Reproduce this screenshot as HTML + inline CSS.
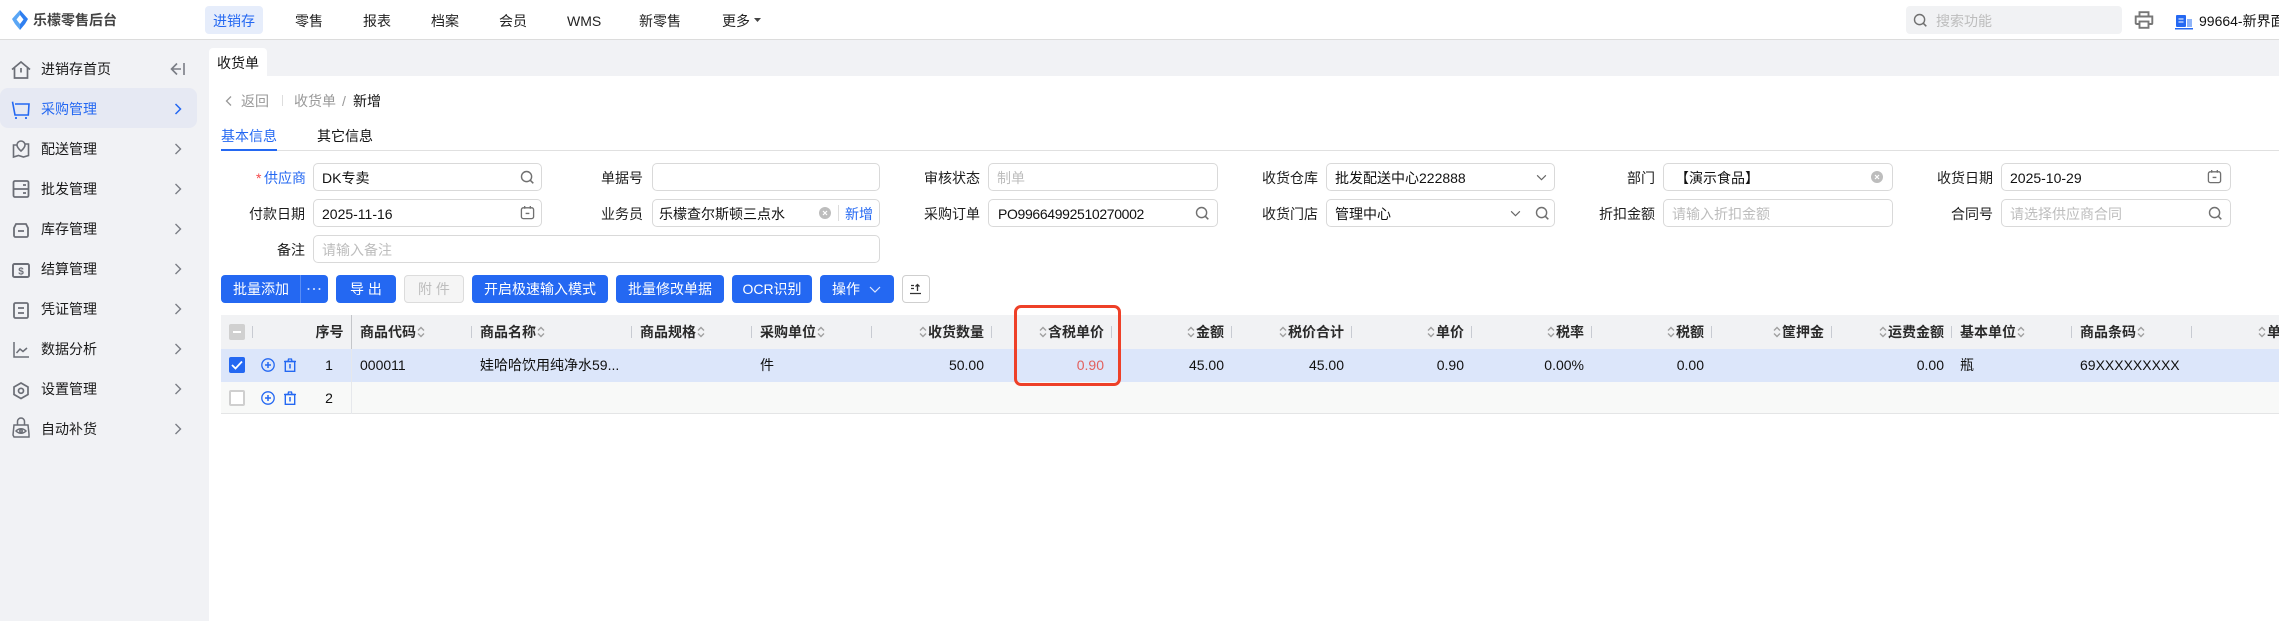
<!DOCTYPE html>
<html lang="zh-CN"><head><meta charset="utf-8"><title>收货单</title>
<style>
*{box-sizing:border-box;margin:0;padding:0}
html,body{width:2279px;height:621px;overflow:hidden;background:#fff}
body{position:relative;font-family:"Liberation Sans","Noto Sans CJK SC",sans-serif;font-size:14px;color:#1c1c1c}
.a{position:absolute}
.t{position:absolute;white-space:nowrap;line-height:20px;height:20px}
.r{text-align:right}
.c{text-align:center}
.i{position:absolute;height:28px;border:1px solid #d9d9d9;border-radius:5px;background:#fff}
.v{color:#111}.p{color:#bdbdbd}
.b{position:absolute;top:275px;height:28px;border-radius:4px;background:#2468f2;color:#fff;line-height:28px;text-align:center;white-space:nowrap}
.h{position:absolute;top:315px;height:34px;line-height:34px;font-weight:700;color:#2a2a2a;white-space:nowrap}
.d{position:absolute;top:326px;height:12px;width:1px;background:#c8cbd2}
.n{position:absolute;top:11px;line-height:20px;height:20px;white-space:nowrap;color:#222}
.m{position:absolute;left:41px;line-height:20px;height:20px;white-space:nowrap;color:#1a1a1a}
svg{position:absolute;overflow:visible}
</style></head><body>
<svg width="0" height="0" style="position:absolute">
<symbol id="s" viewBox="0 0 8 14"><path d="M1 5.500 4 2.500l3 3M1 8.500l3 3 3-3" fill="none" stroke="#a0a0a0" stroke-width="1.400"/></symbol>
<symbol id="q" viewBox="0 0 16 16"><circle cx="7" cy="7" r="5.400" fill="none" stroke="#707070" stroke-width="1.500"/><path d="M11 11l3.200 3.200" stroke="#707070" stroke-width="1.600"/></symbol>
<symbol id="cal" viewBox="0 0 16 16"><rect x="1.500" y="3" width="13" height="11.500" rx="2" fill="none" stroke="#707070" stroke-width="1.400"/><path d="M5 1v3M11 1v3M6 9h4" stroke="#707070" stroke-width="1.400" fill="none"/></symbol>
<symbol id="x" viewBox="0 0 12 12"><circle cx="6" cy="6" r="6" fill="#bdbdbd"/><path d="M4 4l4 4M8 4l-4 4" stroke="#fff" stroke-width="1.200"/></symbol>
<symbol id="dn" viewBox="0 0 12 8"><path d="M1 1.500 6 6.500l5-5" fill="none" stroke="#666" stroke-width="1.300"/></symbol>
<symbol id="ch" viewBox="0 0 8 12"><path d="M1.500 1 6.500 6l-5 5" fill="none" stroke="#7a7d85" stroke-width="1.400"/></symbol>
<symbol id="pl" viewBox="0 0 14 14"><circle cx="7" cy="7" r="6.200" fill="none" stroke="#2468f2" stroke-width="1.300"/><path d="M4 7h6M7 4v6" stroke="#2468f2" stroke-width="1.500"/></symbol>
<symbol id="tr" viewBox="0 0 14 14"><path d="M1 3.500h12M5 3.300 5.500 1h3l.5 2.300" fill="none" stroke="#2468f2" stroke-width="1.300"/><path d="M2.300 3.500h9.400v9.800H2.300z" fill="none" stroke="#2468f2" stroke-width="1.400"/><path d="M7 6v4.500" stroke="#2468f2" stroke-width="1.500"/></symbol>
</svg>

<!-- top bar -->
<div class="a" style="left:0;top:0;width:2279px;height:40px;background:#fff;border-bottom:1px solid #dcdcdc"></div>
<svg style="left:12px;top:10px" width="16" height="20" viewBox="0 0 16 20"><path d="M8 0 3.500 5 0 9l3 5 5 6V14L4.500 9.500 8 5z" fill="#5aa6f5"/><path d="M8 0l4.500 5L16 9l-3 5-5 6V14l3.500-4.500L8 5z" fill="#2f7ff0"/></svg>
<div class="t" style="left:33px;top:10px;font-weight:700;color:#444">乐檬零售后台</div>
<div class="a" style="left:205px;top:6px;width:58px;height:28px;background:#e6edfb;border-radius:4px"></div>
<div class="n" style="left:213px;color:#2468f2">进销存</div>
<div class="n" style="left:295px">零售</div><div class="n" style="left:363px">报表</div><div class="n" style="left:431px">档案</div><div class="n" style="left:499px">会员</div><div class="n" style="left:567px">WMS</div><div class="n" style="left:639px">新零售</div><div class="n" style="left:722px">更多</div>
<svg style="left:754px;top:18px" width="7" height="4"><path d="M0 0h7L3.500 4z" fill="#444"/></svg>
<div class="a" style="left:1906px;top:6px;width:216px;height:28px;background:#f1f2f4;border-radius:4px"></div>
<svg style="left:1913px;top:13px" width="15" height="15"><use href="#q" width="15" height="15"/></svg>
<div class="t p" style="left:1936px;top:11px">搜索功能</div>
<svg style="left:2135px;top:11px" width="18" height="18" viewBox="0 0 18 18"><path d="M4.500 5V1.200h9V5M4.500 13H1.500a.8.8 0 0 1-.8-.8V5.500h16.600v6.700a.8.8 0 0 1-.8.8h-3" fill="none" stroke="#777" stroke-width="1.900"/><rect x="4.500" y="10.500" width="9" height="6.300" fill="none" stroke="#777" stroke-width="1.900"/></svg>
<svg style="left:2175px;top:15px" width="18" height="15" viewBox="0 0 18 15"><rect x="1" y="0" width="10" height="12" rx="1" fill="#2468f2"/><rect x="12" y="4" width="5" height="8" fill="#8fb4f8"/><rect y="13" width="18" height="1.500" fill="#2468f2"/><path d="M3.500 4h5M3.500 7h5" stroke="#fff"/></svg>
<div class="t v" style="left:2199px;top:11px">99664-新界面演示</div>

<!-- sidebar -->
<div class="a" style="left:0;top:40px;width:209px;height:581px;background:#f1f2f5"></div>
<div class="a" style="left:209px;top:40px;width:2070px;height:36px;background:#f1f2f5"></div>
<div class="a" style="left:0;top:88px;width:197px;height:40px;background:#e6e9f3;border-radius:8px"></div>
<div class="m" style="top:59px">进销存首页</div>
<svg style="left:170px;top:62px" width="16" height="14" viewBox="0 0 16 14"><path d="M7 1.500 1.500 7 7 12.500M1.500 7H11M14 1v12" fill="none" stroke="#7a7d85" stroke-width="1.600"/></svg>
<div class="m" style="top:99px;color:#2468f2">采购管理</div>
<div class="m" style="top:139px">配送管理</div><div class="m" style="top:179px">批发管理</div><div class="m" style="top:219px">库存管理</div><div class="m" style="top:259px">结算管理</div><div class="m" style="top:299px">凭证管理</div><div class="m" style="top:339px">数据分析</div><div class="m" style="top:379px">设置管理</div><div class="m" style="top:419px">自动补货</div>
<svg style="left:174px;top:143px" width="8" height="12"><use href="#ch" width="8" height="12"/></svg>
<svg style="left:174px;top:183px" width="8" height="12"><use href="#ch" width="8" height="12"/></svg>
<svg style="left:174px;top:223px" width="8" height="12"><use href="#ch" width="8" height="12"/></svg>
<svg style="left:174px;top:263px" width="8" height="12"><use href="#ch" width="8" height="12"/></svg>
<svg style="left:174px;top:303px" width="8" height="12"><use href="#ch" width="8" height="12"/></svg>
<svg style="left:174px;top:343px" width="8" height="12"><use href="#ch" width="8" height="12"/></svg>
<svg style="left:174px;top:383px" width="8" height="12"><use href="#ch" width="8" height="12"/></svg>
<svg style="left:174px;top:423px" width="8" height="12"><use href="#ch" width="8" height="12"/></svg>
<svg style="left:174px;top:103px" width="8" height="12" viewBox="0 0 8 12"><path d="M1.500 1 6.500 6l-5 5" fill="none" stroke="#2468f2" stroke-width="1.500"/></svg>
<!-- sidebar icons -->
<svg style="left:11px;top:61px" width="20" height="18" viewBox="0 0 20 18" fill="none" stroke="#6b6e76" stroke-width="1.700"><path d="M1 8.500 10 1l9 7.500M3.500 7v10h13V7M10 7v4.500"/></svg>
<svg style="left:12px;top:100px" width="18" height="19" viewBox="0 0 18 19" fill="none" stroke="#2468f2" stroke-width="1.600"><path d="M.5 1.700 3 15h13.300L17 4H3"/><path d="M3 18h2M13 18h2" stroke-width="1.800"/></svg>
<svg style="left:12px;top:140px" width="18" height="18" viewBox="0 0 18 18" fill="none" stroke="#6b6e76" stroke-width="1.600"><path d="M5 5H1.500v12l5-1.500 5 1.500 5-1.500V4H13"/><path d="M9 1a4 4 0 0 1 4 4c0 2.500-4 6-4 6S5 7.500 5 5a4 4 0 0 1 4-4z"/></svg>
<svg style="left:12px;top:180px" width="18" height="18" viewBox="0 0 18 18" fill="none" stroke="#6b6e76" stroke-width="1.800"><rect x="1.500" y="1" width="15" height="16" rx="1.500"/><path d="M1.500 9h15M11 5h3M11 13h3"/></svg>
<svg style="left:13px;top:223px" width="16" height="15" viewBox="0 0 16 15" fill="none" stroke="#6b6e76" stroke-width="1.800"><path d="M3 1h10l2 4v7.500a1.500 1.500 0 0 1-1.500 1.500h-11A1.500 1.500 0 0 1 1 12.500V5zM5 8h6"/></svg>
<svg style="left:12px;top:263px" width="18" height="15" viewBox="0 0 18 15"><rect x="1" y="1" width="16" height="13" rx="1.500" fill="none" stroke="#6b6e76" stroke-width="1.900"/><text x="9" y="11.500" font-size="10" font-weight="700" fill="#6b6e76" text-anchor="middle" font-family="Liberation Sans">$</text></svg>
<svg style="left:13px;top:302px" width="16" height="17" viewBox="0 0 16 17" fill="none" stroke="#6b6e76" stroke-width="1.800"><rect x="1" y="1" width="14" height="15" rx="1.500"/><path d="M5 6h6M5 11h6"/></svg>
<svg style="left:13px;top:342px" width="16" height="16" viewBox="0 0 16 16" fill="none" stroke="#6b6e76" stroke-width="1.500"><path d="M1 0v15h15M3.500 11l3.500-4 3 2.500L14 6"/></svg>
<svg style="left:13px;top:382px" width="16" height="17" viewBox="0 0 16 17" fill="none" stroke="#6b6e76" stroke-width="1.700"><path d="M8 1l7 4v7.500l-7 4-7-4V5z"/><circle cx="8" cy="8.800" r="2.500"/></svg>
<svg style="left:12px;top:417px" width="18" height="21" viewBox="0 0 18 21" fill="none" stroke="#6b6e76" stroke-width="1.500"><path d="M2 8h14l1 9v3H2l-1-2zM5.500 8V4.500a3.500 3.500 0 0 1 7 0V8M4 14c3-3 7-3 10 0-3 3-7 3-10 0z"/><circle cx="9" cy="14" r="1.200"/></svg>

<!-- tab -->
<div class="a" style="left:209px;top:48px;width:58px;height:28px;background:#fff;border-radius:4px 4px 0 0"></div>
<div class="t v" style="left:217px;top:53px">收货单</div>
<!-- breadcrumb -->
<svg style="left:225px;top:96px" width="7" height="10" viewBox="0 0 7 10"><path d="M6 .5 1.500 5 6 9.500" fill="none" stroke="#999" stroke-width="1.300"/></svg>
<div class="t" style="left:241px;top:91px;color:#999">返回</div>
<div class="a" style="left:282px;top:95px;width:1px;height:11px;background:#ddd"></div>
<div class="t" style="left:294px;top:91px;color:#999">收货单</div>
<div class="t" style="left:342px;top:91px;color:#999">/</div>
<div class="t v" style="left:353px;top:91px">新增</div>
<!-- sub tabs -->
<div class="a" style="left:221px;top:150px;width:2058px;height:1px;background:#e0e0e0"></div>
<div class="t" style="left:221px;top:126px;color:#2468f2">基本信息</div>
<div class="a" style="left:221px;top:149px;width:56px;height:2px;background:#2468f2"></div>
<div class="t v" style="left:317px;top:126px">其它信息</div>

<!-- form labels -->
<div class="t" style="left:256px;top:168px;color:#f5484a">*</div>
<div class="t" style="left:264px;top:168px;color:#2468f2">供应商</div>
<div class="t r" style="left:205px;width:100px;top:204px">付款日期</div>
<div class="t r" style="left:205px;width:100px;top:240px">备注</div>
<div class="t r" style="left:543px;width:100px;top:168px">单据号</div>
<div class="t r" style="left:543px;width:100px;top:204px">业务员</div>
<div class="t r" style="left:880px;width:100px;top:168px">审核状态</div>
<div class="t r" style="left:880px;width:100px;top:204px">采购订单</div>
<div class="t r" style="left:1218px;width:100px;top:168px">收货仓库</div>
<div class="t r" style="left:1218px;width:100px;top:204px">收货门店</div>
<div class="t r" style="left:1555px;width:100px;top:168px">部门</div>
<div class="t r" style="left:1555px;width:100px;top:204px">折扣金额</div>
<div class="t r" style="left:1893px;width:100px;top:168px">收货日期</div>
<div class="t r" style="left:1893px;width:100px;top:204px">合同号</div>

<!-- inputs -->
<div class="i" style="left:313px;top:163px;width:229px"></div><div class="t v" style="left:322px;top:168px">DK专卖</div>
<svg style="left:520px;top:170px" width="15" height="15"><use href="#q" width="15" height="15"/></svg>
<div class="i" style="left:652px;top:163px;width:228px"></div>
<div class="i" style="left:988px;top:163px;width:230px"></div><div class="t p" style="left:997px;top:168px">制单</div>
<div class="i" style="left:1326px;top:163px;width:229px"></div><div class="t v" style="left:1335px;top:168px">批发配送中心222888</div>
<svg style="left:1536px;top:174px" width="11" height="7"><use href="#dn" width="11" height="7"/></svg>
<div class="i" style="left:1663px;top:163px;width:230px"></div><div class="t v" style="left:1675px;top:168px">【演示食品】</div>
<svg style="left:1871px;top:171px" width="12" height="12"><use href="#x" width="12" height="12"/></svg>
<div class="i" style="left:2001px;top:163px;width:230px"></div><div class="t v" style="left:2010px;top:168px">2025-10-29</div>
<svg style="left:2207px;top:169px" width="15" height="15"><use href="#cal" width="15" height="15"/></svg>

<div class="i" style="left:313px;top:199px;width:229px"></div><div class="t v" style="left:322px;top:204px">2025-11-16</div>
<svg style="left:520px;top:205px" width="15" height="15"><use href="#cal" width="15" height="15"/></svg>
<div class="i" style="left:652px;top:199px;width:228px"></div><div class="t v" style="left:659px;top:204px">乐檬查尔斯顿三点水</div>
<svg style="left:819px;top:207px" width="12" height="12"><use href="#x" width="12" height="12"/></svg>
<div class="a" style="left:838px;top:205px;width:1px;height:16px;background:#ddd"></div>
<div class="t" style="left:845px;top:204px;color:#2468f2">新增</div>
<div class="i" style="left:988px;top:199px;width:230px"></div><div class="t v" style="left:998px;top:204px;letter-spacing:-.35px">PO99664992510270002</div>
<svg style="left:1195px;top:206px" width="15" height="15"><use href="#q" width="15" height="15"/></svg>
<div class="i" style="left:1326px;top:199px;width:229px"></div><div class="t v" style="left:1335px;top:204px">管理中心</div>
<svg style="left:1510px;top:210px" width="11" height="7"><use href="#dn" width="11" height="7"/></svg>
<svg style="left:1535px;top:206px" width="15" height="15"><use href="#q" width="15" height="15"/></svg>
<div class="i" style="left:1663px;top:199px;width:230px"></div><div class="t p" style="left:1672px;top:204px">请输入折扣金额</div>
<div class="i" style="left:2001px;top:199px;width:230px"></div><div class="t p" style="left:2010px;top:204px">请选择供应商合同</div>
<svg style="left:2208px;top:206px" width="15" height="15"><use href="#q" width="15" height="15"/></svg>
<div class="i" style="left:313px;top:235px;width:567px"></div><div class="t p" style="left:322px;top:240px">请输入备注</div>

<!-- buttons -->
<div class="b" style="left:221px;width:107px"></div>
<div class="t" style="left:233px;top:279px;color:#fff">批量添加</div>
<div class="a" style="left:300px;top:275px;width:1px;height:28px;background:#5a8df5"></div>
<svg style="left:307px;top:288px" width="14" height="2" viewBox="0 0 14 2"><circle cx="1.500" cy="1" r="1" fill="#dfe8fd"/><circle cx="7" cy="1" r="1" fill="#dfe8fd"/><circle cx="12.500" cy="1" r="1" fill="#dfe8fd"/></svg>
<div class="b" style="left:336px;width:60px">导 出</div>
<div class="b" style="left:404px;width:60px;background:#f5f5f5;border:1px solid #dcdcdc;color:#bdbdbd;line-height:26px">附 件</div>
<div class="b" style="left:472px;width:136px">开启极速输入模式</div>
<div class="b" style="left:616px;width:108px">批量修改单据</div>
<div class="b" style="left:732px;width:80px">OCR识别</div>
<div class="b" style="left:820px;width:74px"></div>
<div class="t" style="left:832px;top:279px;color:#fff">操作</div>
<svg style="left:869px;top:286px" width="12" height="7" viewBox="0 0 12 7"><path d="M1 1l5 5 5-5" fill="none" stroke="#dfe8fd" stroke-width="1.200"/></svg>
<div class="a" style="left:902px;top:275px;width:28px;height:28px;border:1px solid #cfcfcf;border-radius:4px;background:#fff"></div>
<svg style="left:910px;top:283px" width="12" height="12" viewBox="0 0 12 12"><path d="M1 2.500h3M1 5.500h3M0 10.500h11M7.500 8V1.500M5.500 3.500l2-2 2 2" fill="none" stroke="#333" stroke-width="1.300"/></svg>

<!-- table -->
<div class="a" style="left:221px;top:315px;width:2058px;height:34px;background:#f1f2f4"></div>
<div class="a" style="left:221px;top:349px;width:2058px;height:33px;background:#dce6fa"></div>
<div class="a" style="left:221px;top:382px;width:2058px;height:32px;background:#f8f9f8;border-bottom:1px solid #e4e5e6"></div>
<div class="a" style="left:351px;top:315px;width:1px;height:34px;background:#c4c6ca"></div>
<div class="a" style="left:351px;top:349px;width:1px;height:65px;background:#e6e8ec"></div>
<div class="a" style="left:229px;top:324px;width:16px;height:16px;background:#d0d0d0;border-radius:2px"></div>
<div class="a" style="left:233px;top:331px;width:8px;height:2px;background:#fff"></div>
<div class="a" style="left:252px;top:326px;width:1px;height:12px;background:#c8cbd2"></div>
<div class="h c" style="left:306px;width:47px">序号</div>
<div class="a" style="left:229px;top:357px;width:16px;height:16px;background:#2468f2;border-radius:2px"></div>
<svg style="left:229px;top:357px" width="16" height="16" viewBox="0 0 16 16"><path d="M3 8l3.500 3.500L13 4.500" fill="none" stroke="#fff" stroke-width="1.800"/></svg>
<div class="a" style="left:229px;top:390px;width:16px;height:16px;background:#fff;border:2px solid #cfcfcf;border-radius:2px"></div>
<svg style="left:261px;top:358px" width="14" height="14"><use href="#pl" width="14" height="14"/></svg>
<svg style="left:283px;top:358px" width="14" height="14"><use href="#tr" width="14" height="14"/></svg>
<svg style="left:261px;top:391px" width="14" height="14"><use href="#pl" width="14" height="14"/></svg>
<svg style="left:283px;top:391px" width="14" height="14"><use href="#tr" width="14" height="14"/></svg>
<div class="t c v" style="left:319px;width:20px;top:355px">1</div>
<div class="t c v" style="left:319px;width:20px;top:388px">2</div>

<!-- header dividers -->
<div class="d" style="left:471px"></div><div class="d" style="left:631px"></div><div class="d" style="left:751px"></div><div class="d" style="left:871px"></div><div class="d" style="left:991px"></div><div class="d" style="left:1111px"></div><div class="d" style="left:1231px"></div><div class="d" style="left:1351px"></div><div class="d" style="left:1471px"></div><div class="d" style="left:1591px"></div><div class="d" style="left:1711px"></div><div class="d" style="left:1831px"></div><div class="d" style="left:1951px"></div><div class="d" style="left:2071px"></div><div class="d" style="left:2191px"></div>

<!-- header cells -->
<div class="h" style="left:360px">商品代码</div><svg style="left:417px;top:325px" width="8" height="14"><use href="#s" width="8" height="14"/></svg>
<div class="h" style="left:480px">商品名称</div><svg style="left:537px;top:325px" width="8" height="14"><use href="#s" width="8" height="14"/></svg>
<div class="h" style="left:640px">商品规格</div><svg style="left:697px;top:325px" width="8" height="14"><use href="#s" width="8" height="14"/></svg>
<div class="h" style="left:760px">采购单位</div><svg style="left:817px;top:325px" width="8" height="14"><use href="#s" width="8" height="14"/></svg>
<div class="h" style="left:928px">收货数量</div><svg style="left:919px;top:325px" width="8" height="14"><use href="#s" width="8" height="14"/></svg>
<div class="h" style="left:1048px">含税单价</div><svg style="left:1039px;top:325px" width="8" height="14"><use href="#s" width="8" height="14"/></svg>
<div class="h" style="left:1196px">金额</div><svg style="left:1187px;top:325px" width="8" height="14"><use href="#s" width="8" height="14"/></svg>
<div class="h" style="left:1288px">税价合计</div><svg style="left:1279px;top:325px" width="8" height="14"><use href="#s" width="8" height="14"/></svg>
<div class="h" style="left:1436px">单价</div><svg style="left:1427px;top:325px" width="8" height="14"><use href="#s" width="8" height="14"/></svg>
<div class="h" style="left:1556px">税率</div><svg style="left:1547px;top:325px" width="8" height="14"><use href="#s" width="8" height="14"/></svg>
<div class="h" style="left:1676px">税额</div><svg style="left:1667px;top:325px" width="8" height="14"><use href="#s" width="8" height="14"/></svg>
<div class="h" style="left:1782px">筐押金</div><svg style="left:1773px;top:325px" width="8" height="14"><use href="#s" width="8" height="14"/></svg>
<div class="h" style="left:1888px">运费金额</div><svg style="left:1879px;top:325px" width="8" height="14"><use href="#s" width="8" height="14"/></svg>
<div class="h" style="left:1960px">基本单位</div><svg style="left:2017px;top:325px" width="8" height="14"><use href="#s" width="8" height="14"/></svg>
<div class="h" style="left:2080px">商品条码</div><svg style="left:2137px;top:325px" width="8" height="14"><use href="#s" width="8" height="14"/></svg>
<div class="h" style="left:2267px">单价</div><svg style="left:2258px;top:325px" width="8" height="14"><use href="#s" width="8" height="14"/></svg>

<!-- row values -->
<div class="t v" style="left:360px;top:355px">000011</div>
<div class="t v" style="left:480px;top:355px">娃哈哈饮用纯净水59...</div>
<div class="t v" style="left:760px;top:355px">件</div>
<div class="t r v" style="left:884px;width:100px;top:355px">50.00</div>
<div class="t r" style="left:1004px;width:100px;top:355px;color:#e2605e">0.90</div>
<div class="t r v" style="left:1124px;width:100px;top:355px">45.00</div>
<div class="t r v" style="left:1244px;width:100px;top:355px">45.00</div>
<div class="t r v" style="left:1364px;width:100px;top:355px">0.90</div>
<div class="t r v" style="left:1484px;width:100px;top:355px">0.00%</div>
<div class="t r v" style="left:1604px;width:100px;top:355px">0.00</div>
<div class="t r v" style="left:1844px;width:100px;top:355px">0.00</div>
<div class="t v" style="left:1960px;top:355px">瓶</div>
<div class="t v" style="left:2080px;top:355px">69XXXXXXXXX</div>

<!-- red highlight -->
<div class="a" style="left:1014px;top:305px;width:107px;height:81px;border:3px solid #ee4028;border-radius:7px"></div>
</body></html>
